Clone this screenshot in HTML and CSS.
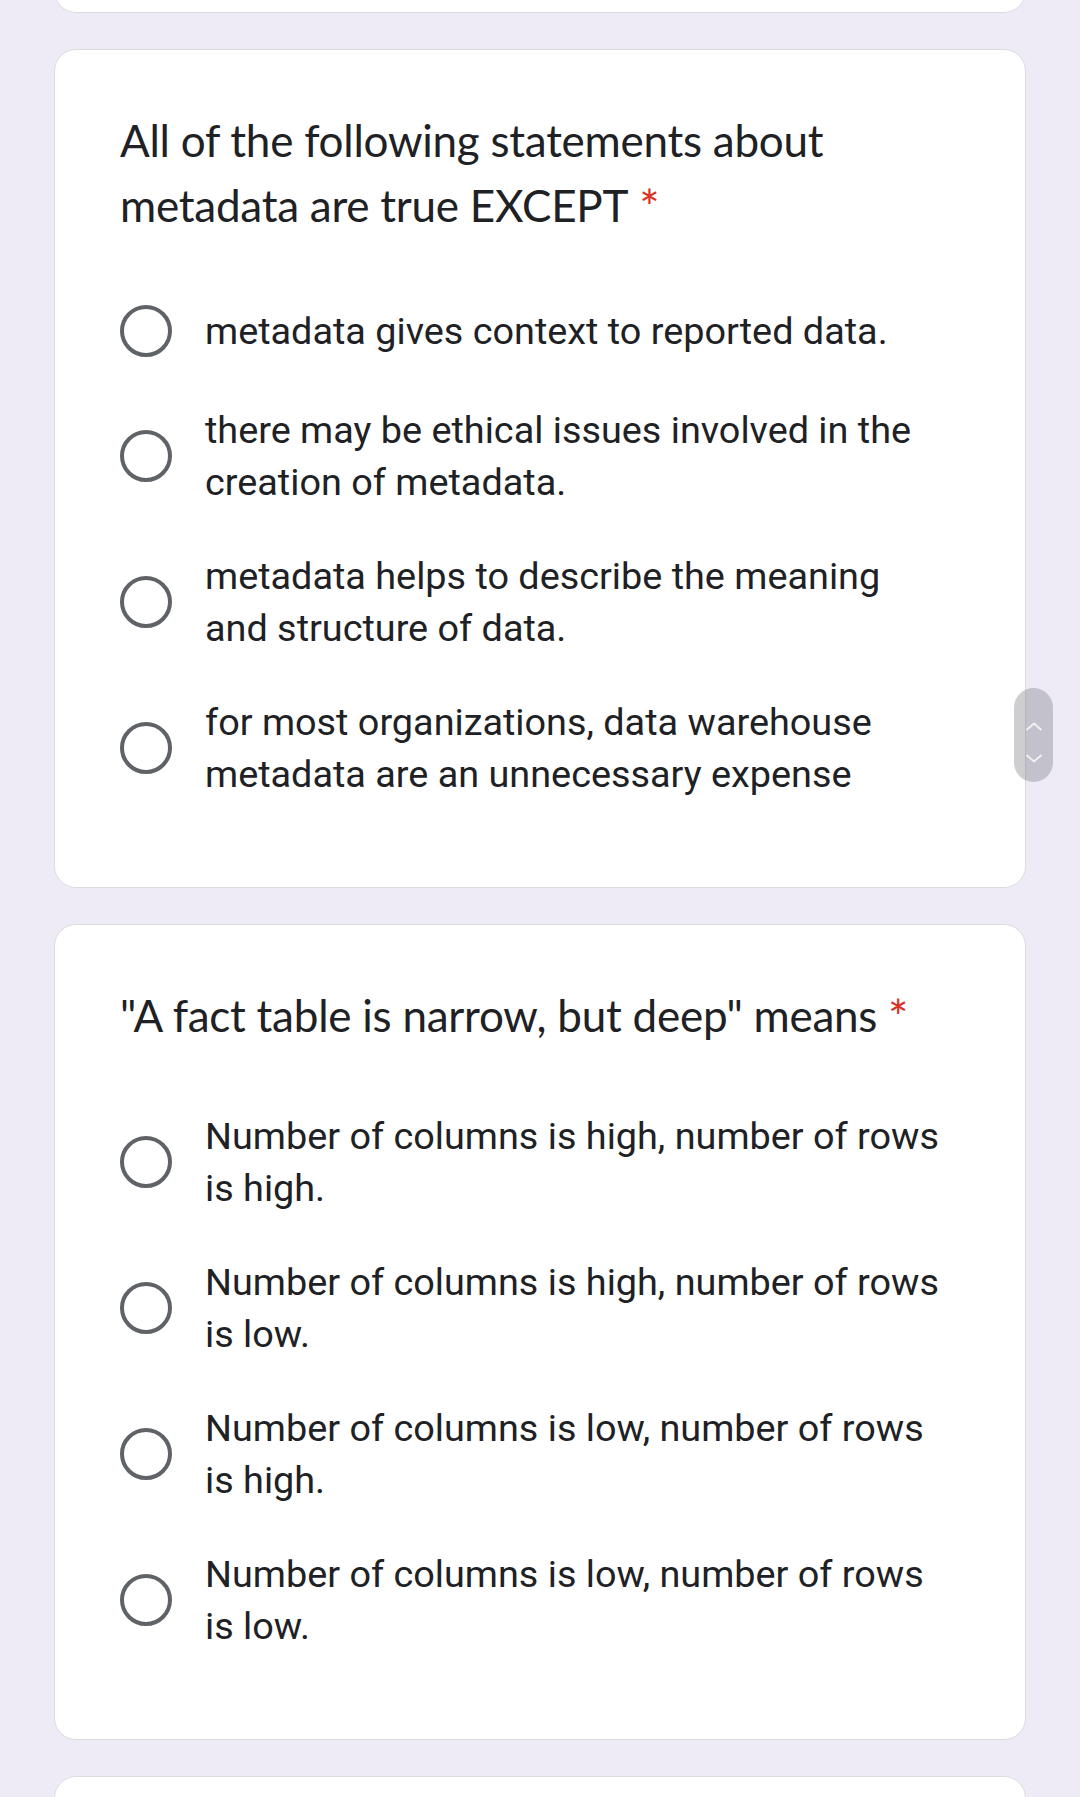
FILE: index.html
```html
<!DOCTYPE html>
<html lang="en">
<head>
<meta charset="utf-8">
<title>Form</title>
<link rel="stylesheet" href="styles.css">
</head>
<body>
<main class="form">
  <section class="card stub"></section>

  <section class="card">
    <h2 class="q-title">All of the following statements about metadata are true EXCEPT<span class="req">*</span></h2>
    <div class="options">
      <label class="opt"><span class="radio"></span><span class="opt-text">metadata gives context to reported data.</span></label>
      <label class="opt"><span class="radio"></span><span class="opt-text">there may be ethical issues involved in the creation of metadata.</span></label>
      <label class="opt"><span class="radio"></span><span class="opt-text">metadata helps to describe the meaning and structure of data.</span></label>
      <label class="opt"><span class="radio"></span><span class="opt-text">for most organizations, data warehouse metadata are an unnecessary expense</span></label>
    </div>
  </section>

  <section class="card">
    <h2 class="q-title">"A fact table is narrow, but deep" means<span class="req">*</span></h2>
    <div class="options">
      <label class="opt"><span class="radio"></span><span class="opt-text">Number of columns is high, number of rows is high.</span></label>
      <label class="opt"><span class="radio"></span><span class="opt-text">Number of columns is high, number of rows is low.</span></label>
      <label class="opt"><span class="radio"></span><span class="opt-text">Number of columns is low, number of rows is high.</span></label>
      <label class="opt"><span class="radio"></span><span class="opt-text">Number of columns is low, number of rows is low.</span></label>
    </div>
  </section>

  <section class="card stub"></section>
</main>

<div class="fastscroll">
  <svg width="18" height="80" viewBox="0 0 18 80" aria-hidden="true">
    <path d="M1.5 35 L9 28.5 L16.5 35" fill="none" stroke="rgba(255,255,255,0.75)" stroke-width="2"/>
    <path d="M1.5 60 L9 66.5 L16.5 60" fill="none" stroke="rgba(255,255,255,0.75)" stroke-width="2"/>
  </svg>
</div>
</body>
</html>
```

FILE: styles.css
```css
html, body {
  margin: 0;
  padding: 0;
}

body {
  background: #eeebf7;
  color: #202124;
  font-family: Roboto, "Noto Sans", sans-serif;
  height: 1797px;
  overflow: hidden;
  position: relative;
}

.form {
  display: flex;
  flex-direction: column;
  gap: 36px;
  padding: 0 54px;
  margin-top: -60px;
}

.card {
  background: #ffffff;
  border: 1px solid #dadce0;
  border-radius: 22px;
  padding: 58px 65px 87px;
}

.stub {
  height: 73px;
  padding: 0;
  box-sizing: border-box;
}

.q-title {
  margin: 0 0 62px;
  font-family: Lato, "Open Sans", sans-serif;
  font-weight: 400;
  font-size: 44px;
  letter-spacing: -0.25px;
  line-height: 65px;
  color: #202124;
}

.req {
  color: #d93025;
  margin-left: 11px;
  font-size: 48px;
  line-height: 0;
  vertical-align: -3px;
}

.options {
  display: flex;
  flex-direction: column;
  gap: 42px;
}

.opt {
  display: flex;
  align-items: center;
  gap: 33px;
  min-height: 62px;
}

.radio {
  flex-shrink: 0;
  width: 52px;
  height: 52px;
  box-sizing: border-box;
  border: 4.5px solid #5f6368;
  border-radius: 50%;
}

.opt-text {
  font-family: Roboto, sans-serif;
  font-size: 37.8px;
  line-height: 52px;
  color: #202124;
  padding-right: 15px;
}

.fastscroll {
  position: absolute;
  left: 1014px;
  top: 688px;
  width: 39px;
  height: 94px;
  border-radius: 20px;
  background: rgba(110, 110, 118, 0.34);
  display: flex;
  align-items: center;
  justify-content: center;
}
```
